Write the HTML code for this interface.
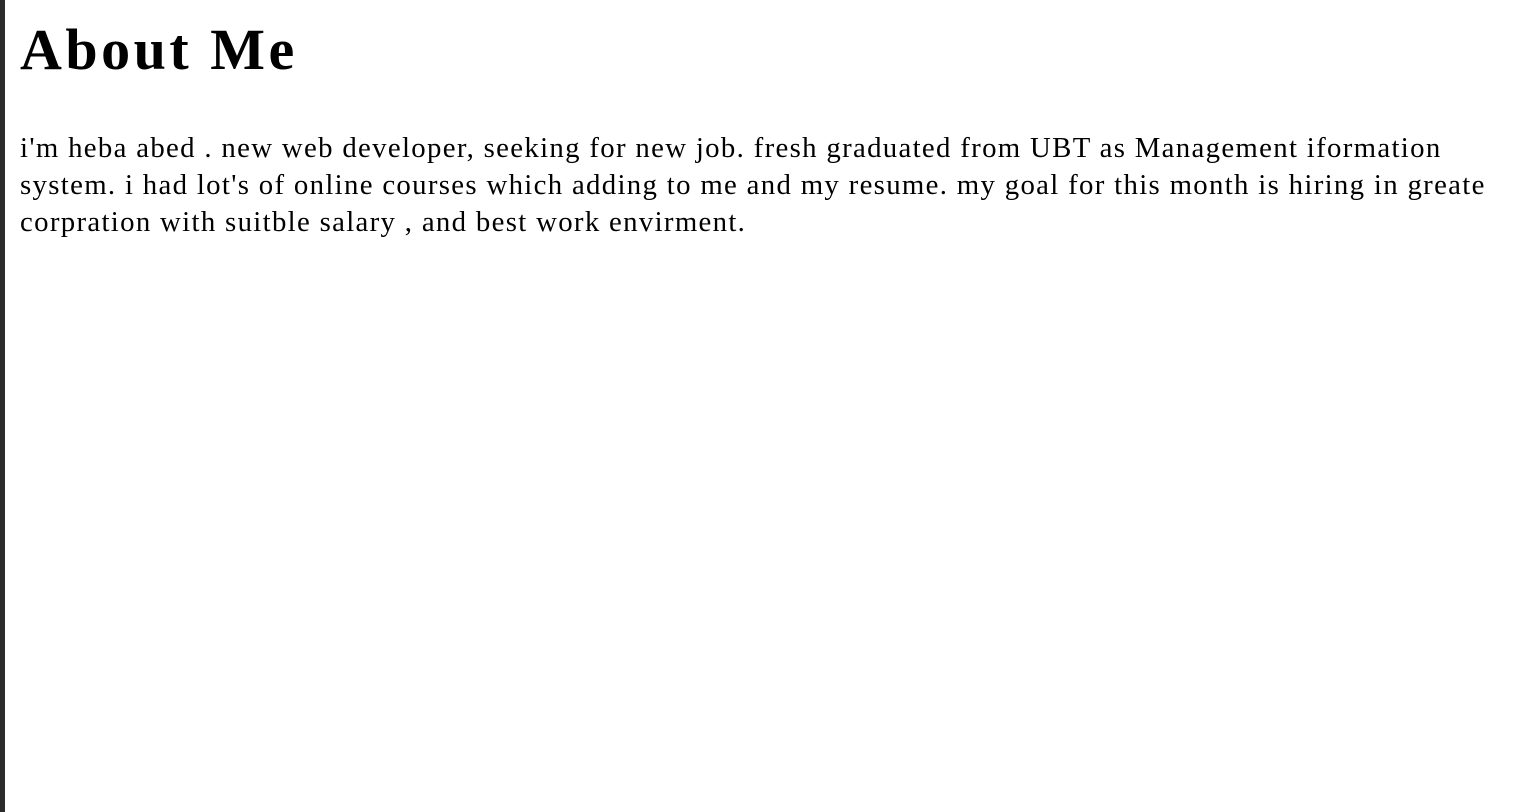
<!DOCTYPE html>
<html><head><meta charset="utf-8"><style>
html,body{margin:0;padding:0;background:#fff;width:1530px;height:812px;overflow:hidden}
.bar{position:absolute;left:0;top:0;width:5px;height:812px;background:#2b2b2b}
h1{position:absolute;left:20px;top:17px;margin:0;font:bold 58px/66px "Liberation Serif",serif;color:#000;letter-spacing:3.5px;white-space:nowrap}
p{position:absolute;left:20px;top:130px;width:1600px;margin:0;font:28.8px/37px "Liberation Serif",serif;color:#000;letter-spacing:1.32px;white-space:nowrap}
</style></head><body>
<div class="bar"></div>
<h1>About Me</h1>
<p>i'm heba abed . new web developer, seeking for new job. fresh graduated from UBT as Management iformation<br>system. i had lot's of online courses which adding to me and my resume. my goal for this month is hiring in greate<br>corpration with suitble salary , and best work envirment.</p>
</body></html>
